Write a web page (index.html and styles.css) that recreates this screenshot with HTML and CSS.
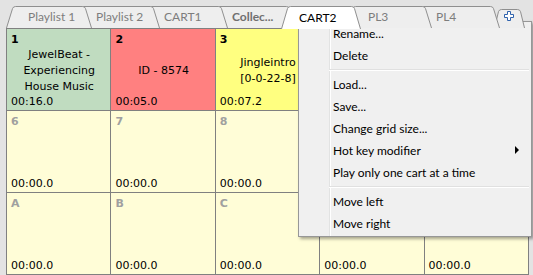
FILE: index.html
```html
<!DOCTYPE html>
<html lang="en">
<head>
    <meta charset="UTF-8">
    <title>Carts</title>
    <link rel="stylesheet" href="styles.css">
</head>
<body>

<div class="tabs">
    <div class="tab t1">
        <svg width="86" height="22" viewBox="0 0 86 22"><path d="M0.5 22 L6.5 2.6 Q7.2 0.5 9.6 0.5 H76.4 Q78.8 0.5 79.5 2.6 L85.5 22"/></svg>
        <span>Playlist 1</span>
    </div>
    <div class="tab t2">
        <svg width="86" height="22" viewBox="0 0 86 22"><path d="M0.5 22 L6.5 2.6 Q7.2 0.5 9.6 0.5 H76.4 Q78.8 0.5 79.5 2.6 L85.5 22"/></svg>
        <span>Playlist 2</span>
    </div>
    <div class="tab t3">
        <svg width="86" height="22" viewBox="0 0 86 22"><path d="M0.5 22 L6.5 2.6 Q7.2 0.5 9.6 0.5 H76.4 Q78.8 0.5 79.5 2.6 L85.5 22"/></svg>
        <span>CART1</span>
    </div>
    <div class="tab t4">
        <svg width="86" height="22" viewBox="0 0 86 22"><path d="M0.5 22 L6.5 2.6 Q7.2 0.5 9.6 0.5 H76.4 Q78.8 0.5 79.5 2.6 L85.5 22"/></svg>
        <span class="bold">Collec...</span>
    </div>
    <div class="tab t5 active">
        <svg width="86" height="23" viewBox="0 0 86 23"><path d="M3.5 23 L9.5 2.6 Q10.2 0.5 12.6 0.5 H73.4 Q75.8 0.5 76.5 2.6 L82.5 23"/></svg>
        <span>CART2</span>
    </div>
    <div class="tab t6">
        <svg width="86" height="22" viewBox="0 0 86 22"><path d="M0.5 22 L6.5 2.6 Q7.2 0.5 9.6 0.5 H76.4 Q78.8 0.5 79.5 2.6 L85.5 22"/></svg>
        <span>PL3</span>
    </div>
    <div class="tab t7">
        <svg width="86" height="22" viewBox="0 0 86 22"><path d="M0.5 22 L6.5 2.6 Q7.2 0.5 9.6 0.5 H76.4 Q78.8 0.5 79.5 2.6 L85.5 22"/></svg>
        <span>PL4</span>
    </div>
    <div class="tab plus">
        <svg width="31" height="19" viewBox="0 0 31 19">
            <path d="M0.5 19 L4.5 2.6 Q5.2 0.5 7.6 0.5 H23.4 Q25.8 0.5 26.5 2.6 L30.5 19"/>
            <path class="cross" d="M13.5 2.5 H16.5 V5.5 H19.5 V8.5 H16.5 V11.5 H13.5 V8.5 H10.5 V5.5 H13.5 Z"/>
        </svg>
    </div>
</div>

<div class="grid">
    <div class="cart green">
        <b>1</b>
        <p>JewelBeat -<br>Experiencing<br>House Music</p>
        <span class="time">00:16.0</span>
    </div>
    <div class="cart red">
        <b>2</b>
        <p>ID - 8574</p>
        <span class="time">00:05.0</span>
    </div>
    <div class="cart yellow">
        <b>3</b>
        <p>Jingleintro<br>[0-0-22-8]</p>
        <span class="time">00:07.2</span>
    </div>
    <!--cells 4, 5, 9, 0 lie fully under the menu-->
    <div class="cart yellow"><b></b><p></p><span class="time"></span></div>
    <div class="cart yellow"><b></b><p></p><span class="time"></span></div>

    <div class="cart empty"><b>6</b><p></p><span class="time">00:00.0</span></div>
    <div class="cart empty"><b>7</b><p></p><span class="time">00:00.0</span></div>
    <div class="cart empty"><b>8</b><p></p><span class="time">00:00.0</span></div>
    <div class="cart empty"><b></b><p></p><span class="time"></span></div>
    <div class="cart empty"><b></b><p></p><span class="time"></span></div>

    <div class="cart empty"><b>A</b><p></p><span class="time">00:00.0</span></div>
    <div class="cart empty"><b>B</b><p></p><span class="time">00:00.0</span></div>
    <div class="cart empty"><b>C</b><p></p><span class="time">00:00.0</span></div>
    <div class="cart empty"><b></b><p></p><span class="time">00:00.0</span></div>
    <div class="cart empty"><b></b><p></p><span class="time">00:00.0</span></div>
</div>

<!--context menu of the CART2 tab-->
<div class="menu">
    <div class="item">Rename...</div>
    <div class="item">Delete</div>
    <div class="sep"></div>
    <div class="item">Load...</div>
    <div class="item">Save...</div>
    <div class="item">Change grid size...</div>
    <div class="item">Hot key modifier<i class="arrow"></i></div>
    <div class="item">Play only one cart at a time</div>
    <div class="sep"></div>
    <div class="item">Move left</div>
    <div class="item">Move right</div>
</div>

</body>
</html>
```

FILE: styles.css
```css
*{
    margin: 0px;
    padding: 0px;
    box-sizing: border-box;
}
html,body{
    overflow: hidden;
}
body{
    width: 533px;
    height: 275px;
    background-color: #e3e3e3;
    position: relative;
}

/* tab strip */
.tabs{
    display: flex;
    align-items: flex-end;
    height: 28px;
    padding-left: 6px;
}
.tab{
    position: relative;
    flex: none;
    width: 86px;
    height: 22px;
    margin-left: -18px;
}
.tab:first-child{
    margin-left: 0px;
}
.tab svg{
    position: absolute;
    left: 0px;
    top: 0px;
}
.tab svg path{
    fill: #eeeeee;
    stroke: #8f8f8f;
    stroke-width: 1;
}
.tab span{
    position: relative;
    display: block;
    padding: 3px 0 0 22px;
    font-family: Lato, "Noto Sans", sans-serif;
    font-size: 12px;
    line-height: 16px;
    color: #7d7d7d;
    white-space: nowrap;
}
.tab span.bold{
    font-weight: bold;
    color: #707070;
}
.t1{ z-index: 9; }
.t2{ z-index: 8; }
.t3{ z-index: 7; }
.t4{ z-index: 6; }
.t6{ z-index: 4; }
.t7{ z-index: 3; }
.active{
    z-index: 10;
    height: 23px;
    margin-bottom: -1px;
}
.active svg path{
    fill: #ffffff;
}
.active span{
    color: #000000;
    padding-top: 4px;
    padding-left: 21px;
}
.plus{
    z-index: 2;
    width: 31px;
    height: 19px;
    margin-left: -6px;
}
.plus svg path.cross{
    fill: #ffffff;
    stroke: #2f62ad;
}

/* cart grid */
.grid{
    display: grid;
    grid-template-columns: repeat(5, 1fr);
    grid-auto-rows: 81px;
    gap: 1px;
    padding: 1px;
    width: 523px;
    margin-left: 6px;
    background-color: #808080;
}
.cart{
    display: flex;
    flex-direction: column;
    padding: 4px 3px 2px 4px;
    font-family: "DejaVu Sans", sans-serif;
    font-size: 11px;
    color: #000000;
}
.cart b{
    height: 13px;
    line-height: 13px;
}
.cart p{
    flex: 1;
    display: flex;
    align-items: center;
    justify-content: center;
    text-align: center;
    line-height: 16px;
}
.cart .time{
    height: 13px;
    line-height: 13px;
}
.green{
    background-color: #c0dcc0;
}
.red{
    background-color: #ff8080;
}
.yellow{
    background-color: #ffff80;
}
.empty{
    background-color: #fffdd7;
}
.empty b{
    color: #a0a0a0;
}

/* context menu */
.menu{
    position: absolute;
    left: 298px;
    top: 21px;
    width: 234px;
    padding: 0px 2px 2px 2px;
    border: 1px solid #979797;
    background-color: #f0f0f0;
    background-image: linear-gradient(90deg, transparent 30px, #e2e3e3 30px, #e2e3e3 31px, #ffffff 31px, #ffffff 32px, transparent 32px);
    box-shadow: 2px 2px 3px rgba(0, 0, 0, 0.35);
    font-family: Lato, "Noto Sans", sans-serif;
    font-size: 12px;
    color: #000000;
}
.item{
    display: flex;
    align-items: center;
    justify-content: space-between;
    height: 22px;
    padding-left: 32px;
    padding-right: 10px;
    white-space: nowrap;
}
.arrow{
    width: 0px;
    height: 0px;
    border-left: 4px solid #000000;
    border-top: 4px solid transparent;
    border-bottom: 4px solid transparent;
}
.sep{
    height: 7px;
    margin-left: 28px;
    padding-top: 3px;
}
.sep::after{
    content: "";
    display: block;
    border-top: 1px solid #e0e0e0;
    border-bottom: 1px solid #ffffff;
}
```
